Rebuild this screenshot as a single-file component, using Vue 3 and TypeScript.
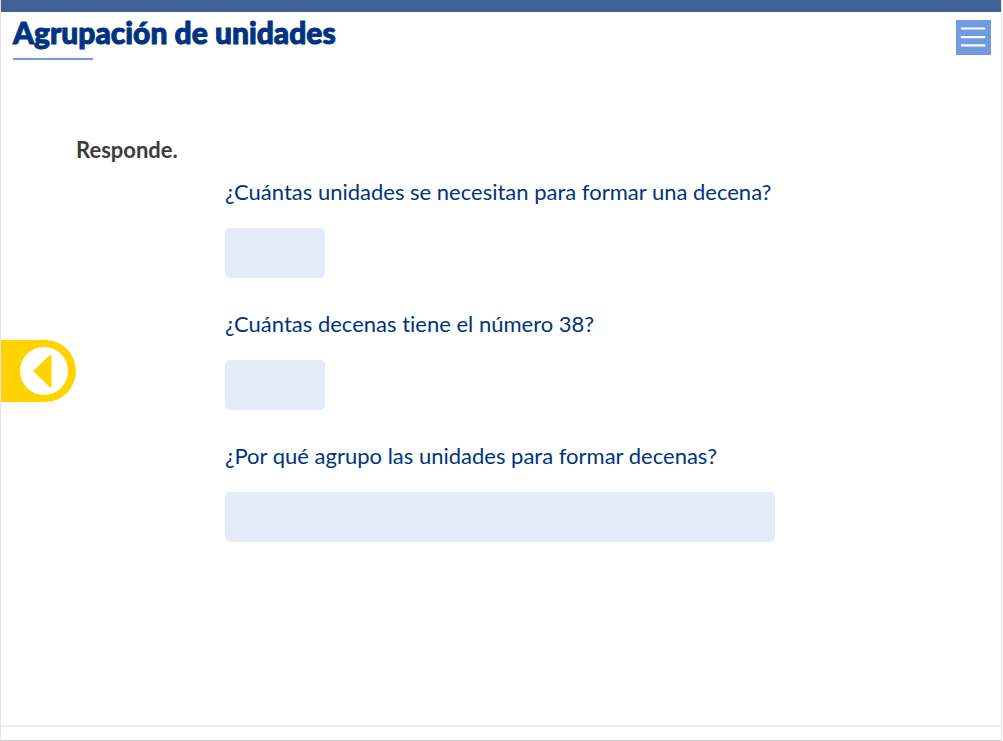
<script setup lang="ts">
import { ref } from 'vue'

interface Question {
  id: string
  text: string
  wide: boolean
}

const questions: Question[] = [
  { id: 'q1', text: '¿Cuántas unidades se necesitan para formar una decena?', wide: false },
  { id: 'q2', text: '¿Cuántas decenas tiene el número 38?', wide: false },
  { id: 'q3', text: '¿Por qué agrupo las unidades para formar decenas?', wide: true },
]

const answers = ref<Record<string, string>>({ q1: '', q2: '', q3: '' })
</script>

<template>
  <div class="page">
    <header class="header">
      <h1 class="title">Agrupación de unidades</h1>
      <button class="menu" type="button" aria-label="Menú">
        <svg viewBox="0 0 35 35" width="35" height="35" aria-hidden="true">
          <path d="M5.8 8.5H28.3M5.8 17.2H28.3M5.8 25.4H28.3" stroke="#fff" stroke-width="2.2" stroke-linecap="round" />
        </svg>
      </button>
    </header>

    <main class="main">
      <h2 class="instruction">Responde.</h2>
      <form class="questions" @submit.prevent>
        <div v-for="q in questions" :key="q.id" class="question">
          <label class="label" :for="q.id">{{ q.text }}</label>
          <input :id="q.id" v-model="answers[q.id]" class="answer" :class="{ wide: q.wide }" type="text" autocomplete="off" />
        </div>
      </form>
    </main>

    <footer class="footer"></footer>

    <button class="previous" type="button" aria-label="Anterior">
      <svg viewBox="0 0 75 62" width="75" height="62" aria-hidden="true">
        <path d="M0 0H44A31 31 0 0 1 44 62H0Z" fill="#ffd200" />
        <circle cx="43" cy="31" r="24" fill="#fff" />
        <path d="M32.5 31L49 15.5H50V47H49Z" fill="#ffd200" stroke="#ffd200" stroke-width="1" stroke-linejoin="round" />
      </svg>
    </button>
  </div>
</template>

<style>
body {
  margin: 0;
  background: #fff;
}
</style>

<style scoped>
.page {
  position: relative;
  box-sizing: border-box;
  display: flex;
  flex-direction: column;
  min-height: 100vh;
  margin-right: 1px;
  border: 1px solid #e4e4e4;
  border-top: 0;
  border-bottom-color: #cccccc;
  font-family: Lato, "Liberation Sans", sans-serif;
  font-variant-ligatures: none;
  color: #003480;
}

.header {
  display: flex;
  align-items: flex-start;
  justify-content: space-between;
  padding: 8px 10px 0 12px;
  border-top: 12px solid #416096;
}

.title {
  margin: 0;
  font-size: 30px;
  font-weight: 900;
  line-height: 24px;
  -webkit-text-stroke: 1px currentColor;
}

.title::after {
  content: "";
  display: block;
  width: 80px;
  height: 2px;
  margin-top: 14px;
  background: #709be0;
}

.menu,
.previous {
  display: block;
  padding: 0;
  border: 0;
  cursor: pointer;
}

.menu {
  background: #709be0;
}

.menu svg,
.previous svg {
  display: block;
  fill: none;
}

.main {
  flex: 1;
  padding: 76px 75px 32px;
}

.instruction {
  margin: 0 0 14px;
  font-size: 22px;
  font-weight: 700;
  line-height: 28px;
  color: #3c3c3b;
}

.questions {
  display: flex;
  flex-direction: column;
  gap: 32px;
  padding-left: 149px;
}

.question {
  display: flex;
  flex-direction: column;
  align-items: flex-start;
  gap: 22px;
}

.label {
  font-size: 22px;
  line-height: 28px;
}

.answer {
  box-sizing: border-box;
  width: 100px;
  height: 50px;
  padding: 0 12px;
  border: 0;
  border-radius: 5px;
  background: #e3eaf8;
  font: inherit;
  font-size: 22px;
  color: inherit;
}

.answer.wide {
  width: 100%;
  max-width: 550px;
}

.footer {
  height: 13px;
  border-top: 2px solid #ededed;
}

.previous {
  position: absolute;
  top: calc(50% - 30px);
  left: 0;
  background: none;
}
</style>
